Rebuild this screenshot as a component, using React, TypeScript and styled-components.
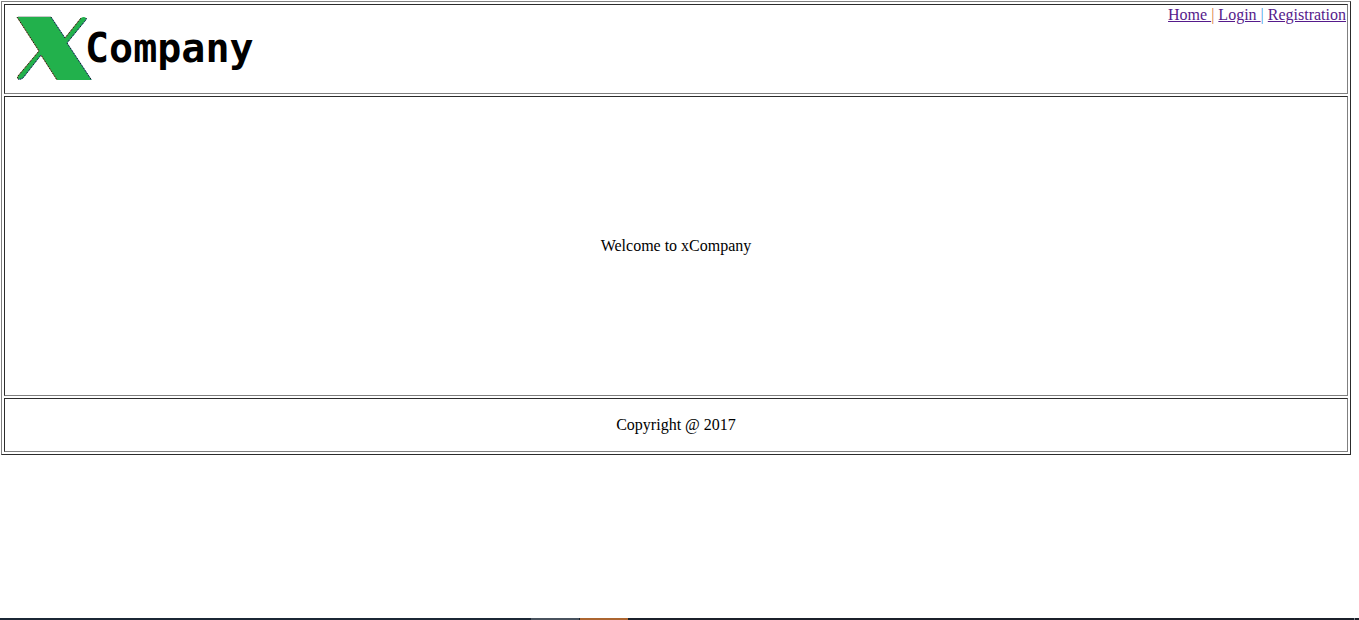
import React from "react";
import styled, { createGlobalStyle } from "styled-components";

const GlobalStyle = createGlobalStyle`
  body {
    margin: 0;
    background: #fff;
    color: #000;
    font-family: "Liberation Serif", "Times New Roman", serif;
    font-size: 16px;
    line-height: 18px;
  }
`;

const Page = styled.div`
  display: flex;
  flex-direction: column;
  justify-content: space-between;
  min-height: 100vh;
`;

const Frame = styled.div`
  display: flex;
  flex-direction: column;
  gap: 2px;
  margin: 1px 8px 0 1px;
  padding: 2px;
  border: 1px solid;
  border-color: #808080 #2c2c2c #2c2c2c #808080;
`;

const cell = `
  box-sizing: border-box;
  padding: 1px;
  border: 1px solid;
  border-color: #2c2c2c #808080 #808080 #2c2c2c;
`;

const Header = styled.header`
  ${cell}
  display: flex;
  justify-content: space-between;
  align-items: flex-start;
  min-height: 90px;
`;

const Brand = styled.div`
  display: flex;
  align-items: center;
  padding: 9px 0 0 10px;
`;

const BrandName = styled.h1`
  margin: 0 0 0 -7px;
  font-family: "DejaVu Sans Mono", monospace;
  font-size: 40px;
  line-height: 46px;
  font-weight: 700;
`;

const Nav = styled.nav`
  white-space: pre;
`;

const NavLink = styled.a`
  color: #551a8b;
  text-decoration: underline;
`;

const Divider = styled.span<{ $color: string }>`
  color: ${(p) => p.$color};
`;

const Main = styled.main`
  ${cell}
  display: flex;
  align-items: center;
  justify-content: center;
  min-height: 300px;
`;

const Footer = styled.footer`
  ${cell}
  display: flex;
  align-items: center;
  justify-content: center;
  min-height: 54px;
`;

const Message = styled.p`
  margin: 0;
`;

const Taskbar = styled.div`
  display: grid;
  grid-template-columns: 531fr 48fr 1fr 48fr 726fr 1fr 4fr;
  height: 2px;
  background: #1b2430;
`;

const Segment = styled.div<{ $color: string }>`
  background: ${(p) => p.$color};
`;

const Logo = () => (
  <svg width="76" height="66" viewBox="16 15 76 66" aria-hidden="true">
    <path
      d="M17 17H51L65 38L81 18Q84 16 86 18Q87 19 85 21L67 43L91.500 80H57L41 55L23 78Q20 80 18 79Q17 78 18 76L39 51Z"
      fill="#22b14c"
    />
    <path
      d="M17 17L39 51L18 76Q17 78 18 79M41 55L57 80M65 38L81 18"
      fill="none"
      stroke="#c86428"
      strokeOpacity="0.5"
    />
    <path
      d="M51 17L65 38M86 18Q87 19 85 21L67 43L91.500 80M41 55L23 78Q20 80 18 79"
      fill="none"
      stroke="#2878d8"
      strokeOpacity="0.5"
    />
    <path
      d="M17 17L39 51L18 76Q17 78 18 79Q20 80 23 78L41 55L57 80M51 17L65 38L81 18M86 18Q87 19 85 21L67 43L91.500 80"
      fill="none"
      stroke="#000"
      strokeDasharray="1 1"
    />
    <path d="M18 16.500H51" stroke="#c8c8c8" />
  </svg>
);

export default function App() {
  return (
    <>
      <GlobalStyle />
      <Page>
        <Frame>
          <Header>
            <Brand>
              <Logo />
              <BrandName>Company</BrandName>
            </Brand>
            <Nav>
              <NavLink href="#home">Home </NavLink>
              <Divider $color="#d87840">|</Divider>{" "}
              <NavLink href="#login">Login </NavLink>
              <Divider $color="#4a9ee8">|</Divider>{" "}
              <NavLink href="#registration">Registration</NavLink>
            </Nav>
          </Header>
          <Main>
            <Message>Welcome to xCompany</Message>
          </Main>
          <Footer>
            <Message>Copyright @ 2017</Message>
          </Footer>
        </Frame>
        <Taskbar>
          <Segment $color="#1b2735" />
          <Segment $color="#48525e" />
          <Segment $color="#1b2430" />
          <Segment $color="#ac6530" />
          <Segment $color="#1b202a" />
          <Segment $color="#7c8288" />
          <Segment $color="#1b202a" />
        </Taskbar>
      </Page>
    </>
  );
}
